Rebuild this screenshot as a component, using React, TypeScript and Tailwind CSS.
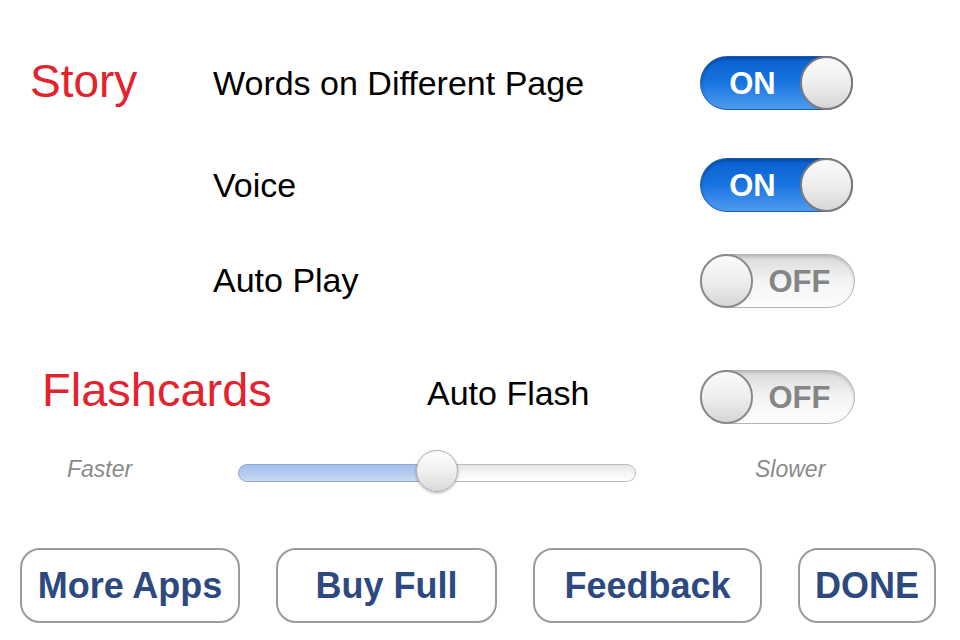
import React from "react";

function Toggle({ on }: { on: boolean }) {
  if (on) {
    return (
      <div className="flex h-[54px] w-[153px] items-center rounded-full border border-[#1b5cb3] bg-linear-to-b from-[#0b5fd0] via-[#1774e0] to-[#4d9bf0] shadow-[inset_0_2px_3px_rgba(0,0,0,0.25)]">
        <span className="flex-1 pl-[4px] text-center text-[31px] font-bold leading-none text-white [font-family:'Liberation_Sans',Arial,sans-serif]">
          ON
        </span>
        <div className="h-[54px] w-[53px] shrink-0 -mr-px rounded-full border-2 border-[#7a7a7a] bg-linear-to-b from-[#fbfbfb] via-[#eeeeee] to-[#d6d6d6]" />
      </div>
    );
  }
  return (
    <div className="flex h-[54px] w-[155px] items-center rounded-full border border-[#b5b5b5] bg-linear-to-b from-[#d9d9d9] via-[#f4f4f4] to-[#fdfdfd] shadow-[inset_0_2px_3px_rgba(0,0,0,0.15)]">
      <div className="h-[54px] w-[53px] shrink-0 -ml-px rounded-full border-2 border-[#8a8a8a] bg-linear-to-b from-[#fbfbfb] via-[#eeeeee] to-[#d6d6d6]" />
      <span className="flex-1 pr-[8px] text-center text-[31px] font-bold leading-none text-[#858585] [font-family:'Liberation_Sans',Arial,sans-serif]">
        OFF
      </span>
    </div>
  );
}

function Row({
  left,
  leftClass,
  label,
  labelClass,
  on,
  className,
}: {
  left?: string;
  leftClass: string;
  label: string;
  labelClass?: string;
  on: boolean;
  className: string;
}) {
  return (
    <div className={`flex h-[54px] items-center ${className}`}>
      <div className={`shrink-0 ${leftClass}`}>{left}</div>
      <div className={`flex-1 text-[34px] leading-none text-black ${labelClass ?? ""}`}>{label}</div>
      <div className="w-[260px] shrink-0">
        <Toggle on={on} />
      </div>
    </div>
  );
}

function Btn({ text, w }: { text: string; w: string }) {
  return (
    <div
      className={`flex h-[75px] items-center justify-center rounded-[20px] border-2 border-[#9b9b9b] bg-white text-[36px] font-bold leading-none text-[#2d4a80] ${w}`}
    >
      {text}
    </div>
  );
}

export default function App() {
  return (
    <div className="h-[640px] w-[960px] overflow-hidden bg-white pt-[56px] [font-family:'Liberation_Sans',Arial,sans-serif]">
      <Row
        left="Story"
        leftClass="w-[213px] pl-[30px] pb-[4px] text-[46px] leading-none text-[#e3222d]"
        label="Words on Different Page"
        on={true}
        className=""
      />
      <Row leftClass="w-[213px]" label="Voice" on={true} className="mt-[48px]" />
      <Row leftClass="w-[213px]" label="Auto Play" labelClass="pb-[2px]" on={false} className="mt-[42px]" />
      <Row
        left="Flashcards"
        leftClass="w-[427px] pl-[42px] pb-[16px] text-[47px] leading-none text-[#e3222d]"
        label="Auto Flash"
        labelClass="pb-[8px]"
        on={false}
        className="mt-[62px]"
      />

      <div className="mt-[26px] flex h-[43px] items-center">
        <div className="w-[238px] shrink-0 pl-[67px] pb-[4px] text-[23px] italic leading-none text-[#8a8a8a]">
          Faster
        </div>
        <div className="relative h-[43px] w-[398px] shrink-0">
          <div className="absolute left-0 right-0 top-[14px] flex h-[18px]">
            <div className="h-[18px] w-[199px] rounded-l-full border border-[#8fa9d4] bg-linear-to-b from-[#a4bfea] via-[#b4cbef] to-[#c9daf4]" />
            <div className="h-[18px] flex-1 rounded-r-full border border-l-0 border-[#bdbdbd] bg-linear-to-b from-[#e6e6e6] via-[#f6f6f6] to-[#ffffff]" />
          </div>
          <div className="absolute left-[178px] top-0 h-[42px] w-[42px] rounded-full border border-[#b0b0b0] bg-linear-to-b from-[#fdfdfd] via-[#f0f0f0] to-[#d9d9d9] shadow-[0_1px_3px_rgba(0,0,0,0.3)]" />
        </div>
        <div className="ml-[119px] pb-[4px] text-[23px] italic leading-none text-[#8a8a8a]">Slower</div>
      </div>

      <div className="mt-[55px] flex gap-[36px] pl-[20px]">
        <Btn text="More Apps" w="w-[220px]" />
        <Btn text="Buy Full" w="w-[221px]" />
        <Btn text="Feedback" w="w-[229px]" />
        <Btn text="DONE" w="w-[138px]" />
      </div>
    </div>
  );
}
